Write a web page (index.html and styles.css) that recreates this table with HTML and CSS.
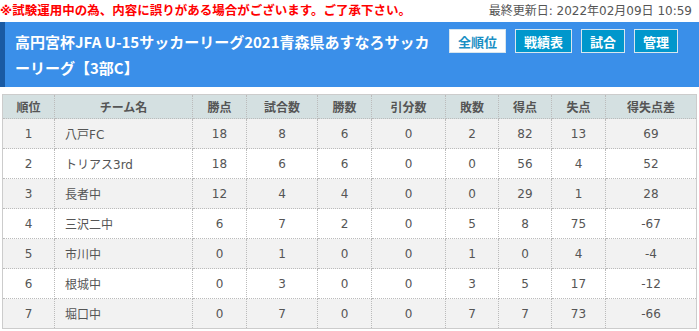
FILE: index.html
```html
<!DOCTYPE html>
<html lang="ja">
<head>
<meta charset="utf-8">
<link rel="stylesheet" href="styles.css">
</head>
<body>
<div class="topbar">
  <span class="notice">※試験運用中の為、内容に誤りがある場合がございます。ご了承下さい。</span>
  <span class="updated">最終更新日: 2022年02月09日 10:59</span>
</div>
<div class="header">
  <h1 class="title">高円宮杯JFA U-15サッカーリーグ2021青森県あすなろサッカーリーグ【3部C】</h1>
  <nav class="nav">
    <a class="btn active">全順位</a>
    <a class="btn">戦績表</a>
    <a class="btn">試合</a>
    <a class="btn">管理</a>
  </nav>
</div>
<table class="standings">
  <colgroup>
    <col class="c-rank"><col class="c-team"><col class="c-pts"><col class="c-played"><col class="c-won"><col class="c-draw"><col class="c-lost"><col class="c-gf"><col class="c-ga"><col>
  </colgroup>
  <thead>
    <tr><th>順位</th><th>チーム名</th><th>勝点</th><th>試合数</th><th>勝数</th><th>引分数</th><th>敗数</th><th>得点</th><th>失点</th><th>得失点差</th></tr>
  </thead>
  <tbody>
    <tr><td>1</td><td class="team">八戸FC</td><td>18</td><td>8</td><td>6</td><td>0</td><td>2</td><td>82</td><td>13</td><td>69</td></tr>
    <tr><td>2</td><td class="team">トリアス3rd</td><td>18</td><td>6</td><td>6</td><td>0</td><td>0</td><td>56</td><td>4</td><td>52</td></tr>
    <tr><td>3</td><td class="team">長者中</td><td>12</td><td>4</td><td>4</td><td>0</td><td>0</td><td>29</td><td>1</td><td>28</td></tr>
    <tr><td>4</td><td class="team">三沢二中</td><td>6</td><td>7</td><td>2</td><td>0</td><td>5</td><td>8</td><td>75</td><td>-67</td></tr>
    <tr><td>5</td><td class="team">市川中</td><td>0</td><td>1</td><td>0</td><td>0</td><td>1</td><td>0</td><td>4</td><td>-4</td></tr>
    <tr><td>6</td><td class="team">根城中</td><td>0</td><td>3</td><td>0</td><td>0</td><td>3</td><td>5</td><td>17</td><td>-12</td></tr>
    <tr><td>7</td><td class="team">堀口中</td><td>0</td><td>7</td><td>0</td><td>0</td><td>7</td><td>7</td><td>73</td><td>-66</td></tr>
  </tbody>
</table>
</body>
</html>
```
FILE: styles.css
```css
html, body {
  margin: 0;
  padding: 0;
  background: #fff;
  font-family: "DejaVu Sans", "Noto Sans CJK JP", sans-serif;
}
.topbar {
  display: flex;
  justify-content: space-between;
  align-items: center;
  height: 22px;
  padding: 0 7px 0 0;
  font-size: 12.5px;
  line-height: 18px;
}
.notice {
  color: #f00;
  font-weight: bold;
}
.updated {
  color: #555;
  font-size: 12px;
}
.header {
  display: flex;
  justify-content: space-between;
  align-items: flex-start;
  height: 65px;
  background: #3a8fe9;
  border-left: 5px solid #1a5aa3;
  box-sizing: border-box;
  padding: 7px 21px 0 10px;
}
.title {
  margin: 0;
  width: 424px;
  color: #fff;
  font-family: "Noto Sans CJK JP", "Noto Sans", sans-serif;
  font-size: 15px;
  font-weight: bold;
  line-height: 26px;
}
.nav {
  display: flex;
  gap: 9px;
}
.btn {
  display: flex;
  align-items: center;
  justify-content: center;
  height: 24px;
  box-sizing: border-box;
  padding: 0 8px;
  border: 1px solid #d8e6ee;
  background: #0097cc;
  color: #fff;
  font-size: 13px;
  font-weight: bold;
}
.btn.active {
  background: #fff;
  color: #1a8fc4;
}
.standings {
  margin: 7px 2px 0 2px;
  width: 695px;
  border-collapse: collapse;
  table-layout: fixed;
  border: 1px solid #ccc;
  font-size: 12px;
  color: #555;
}
.c-rank { width: 52px; }
.c-team { width: 138px; }
.c-pts { width: 54px; }
.c-played { width: 71px; }
.c-won { width: 54px; }
.c-draw { width: 74px; }
.c-lost { width: 53px; }
.c-gf { width: 53px; }
.c-ga { width: 54px; }
.standings th {
  height: 24px;
  padding: 0;
  background: #d4e0e1;
  font-weight: bold;
  border: 1px dotted #bbb;
  border-top: 1px solid #ccc;
  box-sizing: border-box;
}
.standings td {
  height: 30px;
  padding: 0;
  text-align: center;
  border: 1px dotted #bbb;
  box-sizing: border-box;
}
.standings td.team {
  text-align: left;
  padding-left: 10px;
}
.standings tbody tr:nth-child(odd) {
  background: #f2f2f2;
}
```
